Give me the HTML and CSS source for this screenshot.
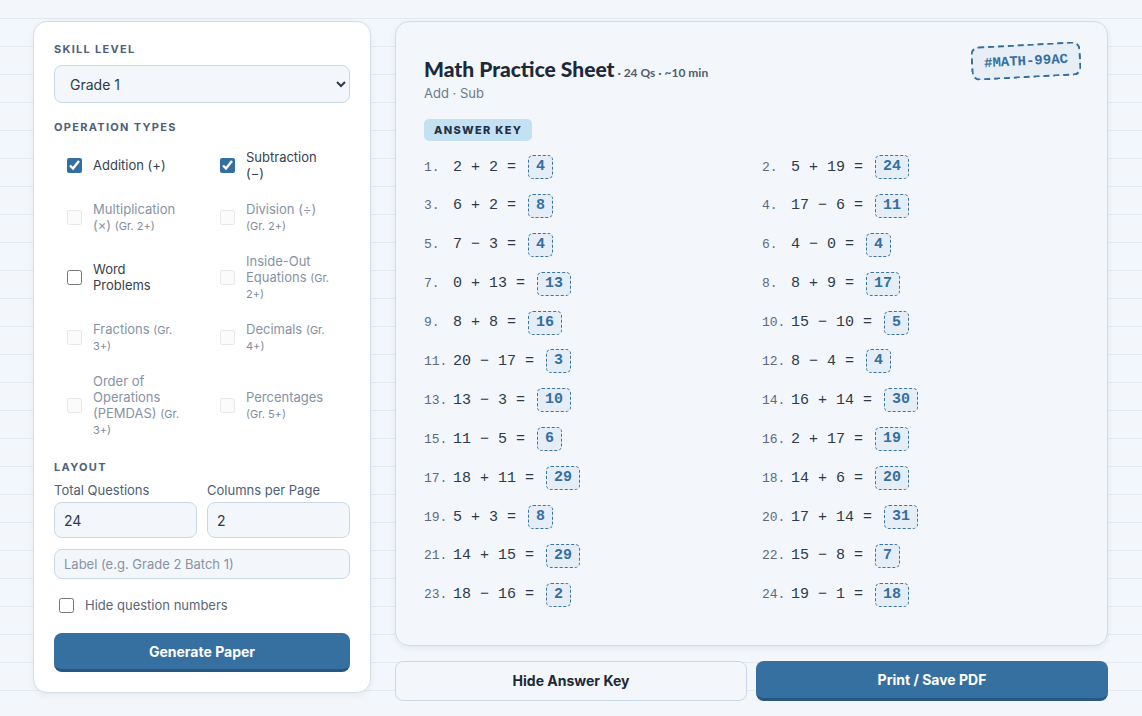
FILE: index.html
```html
<!DOCTYPE html>
<html lang="en">
<head>
<meta charset="utf-8">
<title>Math Practice Sheet</title>
<link rel="stylesheet" href="styles.css">
</head>
<body>
<div class="app">
  <aside class="panel">
    <div class="section-label">Skill Level</div>
    <select class="select"><option>Grade 1</option><option>Grade 2</option></select>

    <div class="section-label gap-top">Operation Types</div>
    <div class="ops">
      <label class="op"><input type="checkbox" checked><span>Addition (+)</span></label>
      <label class="op"><input type="checkbox" checked><span>Subtraction (−)</span></label>
      <label class="op disabled"><input type="checkbox" disabled><span>Multiplication (×) <small>(Gr. 2+)</small></span></label>
      <label class="op disabled"><input type="checkbox" disabled><span>Division (÷) <small>(Gr. 2+)</small></span></label>
      <label class="op"><input type="checkbox"><span>Word Problems</span></label>
      <label class="op disabled"><input type="checkbox" disabled><span>Inside-Out Equations <small>(Gr. 2+)</small></span></label>
      <label class="op disabled"><input type="checkbox" disabled><span>Fractions <small>(Gr. 3+)</small></span></label>
      <label class="op disabled"><input type="checkbox" disabled><span>Decimals <small>(Gr. 4+)</small></span></label>
      <label class="op disabled"><input type="checkbox" disabled><span>Order of Operations (PEMDAS) <small>(Gr. 3+)</small></span></label>
      <label class="op disabled"><input type="checkbox" disabled><span>Percentages <small>(Gr. 5+)</small></span></label>
    </div>

    <div class="section-label gap-top">Layout</div>
    <div class="fields">
      <label class="field"><span class="field-label">Total Questions</span><input class="input" type="text" value="24"></label>
      <label class="field"><span class="field-label">Columns per Page</span><input class="input" type="text" value="2"></label>
    </div>
    <input class="input small" type="text" placeholder="Label (e.g. Grade 2 Batch 1)">
    <label class="hide-nums"><input type="checkbox"><span>Hide question numbers</span></label>
    <button class="btn primary generate">Generate Paper</button>
  </aside>

  <main class="main">
    <section class="sheet">
      <header class="sheet-head">
        <div class="sheet-title-block">
          <h1 class="sheet-title">Math Practice Sheet<span class="meta"> · 24 Qs · ~10 min</span></h1>
          <div class="sheet-sub">Add · Sub</div>
        </div>
        <div class="badge">#MATH-99AC</div>
      </header>
      <div class="key-pill">Answer Key</div>
      <div class="questions">
        <div class="q"><span class="qn">1.</span><span class="eq">2 + 2 =</span><span class="ans">4</span></div>
        <div class="q"><span class="qn">2.</span><span class="eq">5 + 19 =</span><span class="ans">24</span></div>
        <div class="q"><span class="qn">3.</span><span class="eq">6 + 2 =</span><span class="ans">8</span></div>
        <div class="q"><span class="qn">4.</span><span class="eq">17 − 6 =</span><span class="ans">11</span></div>
        <div class="q"><span class="qn">5.</span><span class="eq">7 − 3 =</span><span class="ans">4</span></div>
        <div class="q"><span class="qn">6.</span><span class="eq">4 − 0 =</span><span class="ans">4</span></div>
        <div class="q"><span class="qn">7.</span><span class="eq">0 + 13 =</span><span class="ans">13</span></div>
        <div class="q"><span class="qn">8.</span><span class="eq">8 + 9 =</span><span class="ans">17</span></div>
        <div class="q"><span class="qn">9.</span><span class="eq">8 + 8 =</span><span class="ans">16</span></div>
        <div class="q"><span class="qn">10.</span><span class="eq">15 − 10 =</span><span class="ans">5</span></div>
        <div class="q"><span class="qn">11.</span><span class="eq">20 − 17 =</span><span class="ans">3</span></div>
        <div class="q"><span class="qn">12.</span><span class="eq">8 − 4 =</span><span class="ans">4</span></div>
        <div class="q"><span class="qn">13.</span><span class="eq">13 − 3 =</span><span class="ans">10</span></div>
        <div class="q"><span class="qn">14.</span><span class="eq">16 + 14 =</span><span class="ans">30</span></div>
        <div class="q"><span class="qn">15.</span><span class="eq">11 − 5 =</span><span class="ans">6</span></div>
        <div class="q"><span class="qn">16.</span><span class="eq">2 + 17 =</span><span class="ans">19</span></div>
        <div class="q"><span class="qn">17.</span><span class="eq">18 + 11 =</span><span class="ans">29</span></div>
        <div class="q"><span class="qn">18.</span><span class="eq">14 + 6 =</span><span class="ans">20</span></div>
        <div class="q"><span class="qn">19.</span><span class="eq">5 + 3 =</span><span class="ans">8</span></div>
        <div class="q"><span class="qn">20.</span><span class="eq">17 + 14 =</span><span class="ans">31</span></div>
        <div class="q"><span class="qn">21.</span><span class="eq">14 + 15 =</span><span class="ans">29</span></div>
        <div class="q"><span class="qn">22.</span><span class="eq">15 − 8 =</span><span class="ans">7</span></div>
        <div class="q"><span class="qn">23.</span><span class="eq">18 − 16 =</span><span class="ans">2</span></div>
        <div class="q"><span class="qn">24.</span><span class="eq">19 − 1 =</span><span class="ans">18</span></div>
      </div>
    </section>
    <div class="actions">
      <button class="btn ghost">Hide Answer Key</button>
      <button class="btn primary">Print / Save PDF</button>
    </div>
  </main>
</div>
</body>
</html>
```

FILE: styles.css
```css
* { box-sizing: border-box; }

html, body { height: 100%; }

body {
  margin: 0;
  font-family: Inter, "Open Sans", "Liberation Sans", sans-serif;
  color: #2c3a4c;
  background-color: #f3f6fa;
  background-image: repeating-linear-gradient(to bottom,
    transparent 0, transparent 18px,
    #e2e9f1 18px, #e2e9f1 19px,
    transparent 19px, transparent 28px);
}

.app {
  display: flex;
  align-items: flex-start;
  gap: 24px;
  padding: 21px 34px 0 33px;
}

/* ---------- left panel ---------- */
.panel {
  width: 338px;
  flex: none;
  background: #ffffff;
  border: 1px solid #d3deea;
  border-radius: 14px;
  padding: 20px;
  box-shadow: 0 2px 6px rgba(40, 70, 110, 0.06);
  display: flex;
  flex-direction: column;
}

.section-label {
  font-size: 11px;
  line-height: 14px;
  font-weight: 700;
  letter-spacing: 1.3px;
  text-transform: uppercase;
  color: #4e6178;
}

.gap-top { margin-top: 17px; }

.select {
  margin-top: 9px;
  height: 38px;
  width: 100%;
  border: 1px solid #c9d8e8;
  border-radius: 8px;
  background: #f3f7fb;
  font-family: inherit;
  font-size: 14px;
  color: #2c3a4c;
  padding: 0 8px 0 11px;
}

.ops {
  margin-top: 9px;
  display: grid;
  grid-template-columns: 1fr 1fr;
  column-gap: 10px;
  row-gap: 8px;
}

.op {
  display: flex;
  align-items: center;
  gap: 11px;
  padding: 6px 12px 6px 13px;
  font-size: 13px;
  line-height: 16px;
  color: #34414f;
}

.op span { display: block; line-height: 16px; }

.op input, .hide-nums input {
  flex: none;
  width: 15px;
  height: 15px;
  margin: 0;
  accent-color: #356fa0;
}

.op small {
  font-size: 11px;
  line-height: 1;
  vertical-align: baseline;
  color: #7a889a;
}

.op.disabled { color: #8593a5; }
.op.disabled small { color: #7f8c9d; }
.op.disabled input { opacity: 0.5; }

.fields {
  margin-top: 8px;
  display: grid;
  grid-template-columns: 1fr 1fr;
  column-gap: 10px;
}

.field { display: flex; flex-direction: column; gap: 4px; }

.field-label {
  font-size: 13px;
  line-height: 16px;
  color: #4e6074;
}

.input {
  width: 100%;
  height: 36px;
  border: 1px solid #c9d8e8;
  border-radius: 8px;
  background: #f3f7fb;
  font-family: inherit;
  font-size: 14px;
  color: #2c3a4c;
  padding: 0 9px;
}

.input.small {
  margin-top: 11px;
  height: 30px;
  font-size: 13px;
}

.input::placeholder { color: #8593a5; }

.hide-nums {
  margin-top: 16px;
  display: flex;
  align-items: center;
  gap: 11px;
  padding-left: 5px;
  height: 20px;
  font-size: 13px;
  color: #56667a;
}

.btn {
  font-family: inherit;
  font-size: 14px;
  font-weight: 700;
  border-radius: 8px;
  cursor: pointer;
}

.btn.primary {
  background: #3670a1;
  color: #ffffff;
  border: none;
  border-bottom: 3px solid #28587f;
}

.generate {
  margin-top: 18px;
  height: 39px;
  width: 100%;
}

/* ---------- main ---------- */
.main {
  flex: 1;
  min-width: 0;
  display: flex;
  flex-direction: column;
  gap: 15px;
}

.sheet {
  background: #f3f7fb;
  border: 1px solid #cfdbe8;
  border-radius: 14px;
  padding: 34px 28px 38px 28px;
  box-shadow: 0 2px 6px rgba(40, 70, 110, 0.07);
}

.sheet-head {
  display: flex;
  justify-content: space-between;
  align-items: flex-start;
}

.sheet-title {
  margin: 0;
  font-family: Lato, "Noto Sans", sans-serif;
  font-weight: 900;
  font-size: 21px;
  line-height: 25px;
  color: #1d2939;
}

.sheet-title .meta {
  font-family: Lato, sans-serif;
  font-size: 12px;
  font-weight: 700;
  color: #4e5e72;
}

.sheet-sub {
  font-size: 13px;
  line-height: 16px;
  color: #6a7a8d;
}

.badge {
  margin-top: -12px;
  margin-right: -2px;
  border: 2px dashed #356fa0;
  border-radius: 8px;
  background: #e8eef6;
  padding: 7px 11px;
  font-family: "Liberation Mono", "DejaVu Sans Mono", monospace;
  font-weight: 700;
  font-size: 14px;
  line-height: 16px;
  color: #356fa0;
  transform: rotate(-3deg);
}

.key-pill {
  margin-top: 18px;
  display: block;
  width: fit-content;
  height: 22px;
  line-height: 22px;
  padding: 0 10px;
  border-radius: 5px;
  background: #c4e0f3;
  color: #1f3147;
  font-size: 11px;
  font-weight: 800;
  letter-spacing: 1.3px;
  text-transform: uppercase;
}

.questions {
  margin-top: 14px;
  display: grid;
  grid-template-columns: 1fr 1fr;
  column-gap: 21px;
  row-gap: 14.9px;
}

.q {
  display: flex;
  align-items: center;
  height: 24px;
  font-family: "Liberation Mono", "DejaVu Sans Mono", monospace;
}

.qn {
  width: 29px;
  flex: none;
  font-size: 13px;
  color: #5b6b80;
}

.eq {
  font-size: 15px;
  color: #2e3a4a;
  white-space: pre;
}

.ans {
  margin-left: 12px;
  height: 24px;
  line-height: 22px;
  padding: 0 7px;
  border: 1px dashed #3a74a6;
  border-radius: 5px;
  background: #e5eef7;
  color: #356fa0;
  font-size: 15px;
  font-weight: 700;
}

.actions {
  display: grid;
  grid-template-columns: 1fr 1fr;
  gap: 9px;
}

.actions .btn { height: 40px; }

.btn.ghost {
  background: #f3f7fb;
  border: 1px solid #c9d8e8;
  color: #1d2939;
}
```
